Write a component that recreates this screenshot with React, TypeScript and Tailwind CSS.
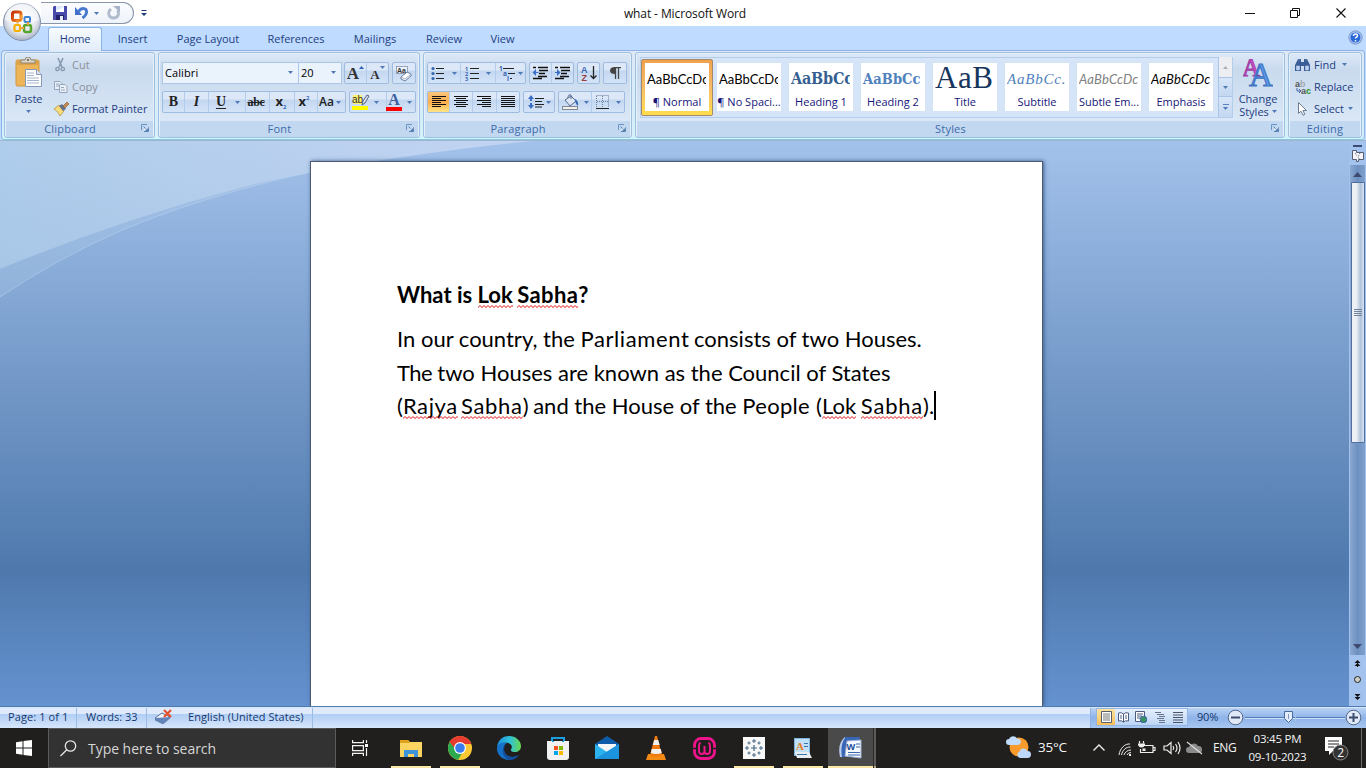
import React from "react";

type Kids = { children?: React.ReactNode };

const Caret = ({ className = "" }: { className?: string }) => (
  <svg width="5" height="3" viewBox="0 0 5 3" className={`shrink-0 ${className}`}>
    <path d="M0 0h5L2.500 3z" fill="#4f79b8" />
  </svg>
);

const Launcher = () => (
  <svg width="8" height="8" viewBox="0 0 8 8" fill="none">
    <path d="M.5 6V.5H6" stroke="#6a94c4" />
    <path d="M2.500 2.500l3 3M7.500 3v4.500H3" stroke="#5682b4" />
    <path d="M4 7V5h3V3" stroke="#fff" strokeWidth=".6" />
    <path d="M4 7h3.500V3.500z" fill="#5682b4" />
  </svg>
);

function Group({ label, width, launcher = true, children }: Kids & { label: string; width: string; launcher?: boolean }) {
  return (
    <section className={`flex h-[86px] shrink-0 flex-col overflow-hidden rounded-[3px] border border-[#9dbfe0] bg-linear-to-b from-[#dce8f6] from-0% via-[#c9daee] via-20% to-[#d9e7f6] to-80% shadow-[inset_0_0_0_1px_#e6f0fa] ${width}`}>
      <div className="flex h-[68px] shrink-0">{children}</div>
      <div className="mx-px flex h-[16px] items-center bg-[#c1d8f0] text-[#3e6aaa]">
        <span className={`flex-1 pb-px text-center tracking-[0.2px] ${launcher ? "pr-[7px]" : ""}`}>{label}</span>
        {launcher && <span className="mr-[4px] mb-[2px]"><Launcher /></span>}
      </div>
    </section>
  );
}

const Box = ({ children, w }: Kids & { w: string }) => (
  <div className={`flex h-[22px] shrink-0 items-stretch overflow-hidden rounded-[2px] border border-[#9ebbe0] bg-linear-to-b from-[#dce8f8] from-35% via-[#c3d7f0] via-40% to-[#d4e4f8] ${w}`}>{children}</div>
);
const Cell = ({ children, w, on = false, line = true }: Kids & { w: string; on?: boolean; line?: boolean }) => (
  <div className={`flex shrink-0 items-center justify-center ${line ? "border-r border-[#b4cceb]" : ""} ${on ? "bg-linear-to-b from-[#f9c57d] via-[#fbad4b] to-[#ffe486]" : ""} ${w}`}>{children}</div>
);

const Lines = ({ rows }: { rows: number[][] }) => (
  <svg width="15" height="14" viewBox="0 0 15 14" shapeRendering="crispEdges">
    {rows.map(([x, w], i) => (
      <rect key={i} x={x} y={1 + i * 2} width={w} height="1" fill="#111" />
    ))}
  </svg>
);

const OfficeOrb = () => (
  <svg width="40" height="40" viewBox="0 0 40 40">
    <defs>
      <radialGradient id="orb" cx=".5" cy=".4" r=".6">
        <stop offset="0" stopColor="#fff" />
        <stop offset=".65" stopColor="#e4e7ee" />
        <stop offset="1" stopColor="#a7b1c4" />
      </radialGradient>
      <linearGradient id="red" x2="1" y2="1"><stop stopColor="#c73008" /><stop offset="1" stopColor="#f58b1f" /></linearGradient>
    </defs>
    <circle cx="20" cy="20" r="18.500" fill="url(#orb)" stroke="#8293ad" />
    <path d="M3 18a17 17 0 0 1 34 0q-17 8-34 0" fill="#fff" opacity=".5" />
    <g fill="none" strokeWidth="2.500">
      <rect x="10.500" y="10" width="8.500" height="8.500" rx="2" stroke="url(#red)" strokeWidth="3" />
      <rect x="22.500" y="15" width="5.500" height="5" rx="1" stroke="#3e83d2" strokeWidth="2" />
      <rect x="12.500" y="23" width="5.500" height="6" rx="1" stroke="#f5b000" strokeWidth="2.200" />
      <rect x="22" y="23" width="7" height="7" rx="2" stroke="#57a52d" />
    </g>
    <path d="M18.500 13h2v4h-2zM25 20h2v3h-2zM14.500 18.500h2v3h-2zM18 25h4v2h-4z" fill="#f0a13b" />
  </svg>
);

const QuickAccess = () => (
  <div className="flex h-[22px] w-[93px] items-center rounded-r-full border border-l-0 border-[#8995a8] bg-linear-to-b from-[#fbfcfe] to-[#eef3fa] pl-[12px]">
    <svg width="14" height="14" viewBox="0 0 14 14">
      <path d="M0 1l1-1h13v14H0z" fill="#4a4aad" />
      <path d="M3 0h8v6H3z" fill="#dfe9fa" /><path d="M3 5l8-4v5H3z" fill="#fff" />
      <path d="M3 9h8v5H3z" fill="#23236b" /><path d="M7 10h3v4H7z" fill="#e8ecf8" />
    </svg>
    <svg className="ml-[8px]" width="13" height="14" viewBox="0 0 13 14" fill="none">
      <path d="M3.500 5.500C7 1 12 2 11.500 6.500C11.300 9 9.500 10.500 7.500 12" stroke="#4779cf" strokeWidth="2.900" />
      <path d="M0 1v8h7z" fill="#3f6fc8" />
    </svg>
    <Caret className="ml-[6px]" />
    <svg className="ml-[8px]" width="14" height="14" viewBox="0 0 14 14" fill="none">
      <path d="M4 3C0 6 1.500 12 6.500 12S12.500 7 10.500 4" stroke="#b1bccd" strokeWidth="2.900" />
      <path d="M6 0h7v6z" fill="#a7b4c8" />
    </svg>
  </div>
);

const TitleBar = () => (
  <header className="flex h-[26px] shrink-0 items-center bg-white text-[12px] text-[#111]">
    <div className="flex w-[150px] items-center pl-[41px]">
      <QuickAccess />
      <svg className="ml-[7px] shrink-0" width="6" height="7" viewBox="0 0 6 7"><path d="M.5 0h5v1h-5zM0 3h6L3 6z" fill="#213f78" /></svg>
    </div>
    <h1 className="flex-1 pt-px pr-[7px] text-center tracking-[-0.1px]">what - Microsoft Word</h1>
    <div className="flex w-[139px] pr-[2px] pb-px">
      <svg width="137" height="24" viewBox="0 0 137 24" fill="none" stroke="#111">
        <path d="M18 12.500h10" />
        <path d="M63.500 9.500h7v7h-7zM65.500 9v-1.500h7v7H71" />
        <path d="M109.500 7.500l9 9m0-9l-9 9" strokeWidth="1.100" />
      </svg>
    </div>
  </header>
);

const tabs: [string, string][] = [
  ["Insert", "w-[59px]"], ["Page Layout", "w-[92px]"], ["References", "w-[84px]"],
  ["Mailings", "w-[74px]"], ["Review", "w-[64px]"], ["View", "w-[53px]"],
];

const Tabs = () => (
  <nav className="flex h-[24px] shrink-0 bg-[#bfdbff] pl-[48px] text-[#1e4082]">
    <div className="z-10 mt-px flex h-[24px] w-[54px] items-center justify-center rounded-t-[3px] border border-b-0 border-[#8bb3e3] bg-linear-to-b from-[#f7fbff] to-[#e1ecf9] pb-[2px] tracking-[-0.1px]">Home</div>
    <div className="ml-px flex">
      {tabs.map(([t, w]) => <div key={t} className={`flex items-center justify-center ${w}`}>{t}</div>)}
    </div>
    <svg className="mt-[4px] mr-[3px] ml-auto" width="15" height="15" viewBox="0 0 15 15">
      <circle cx="7.500" cy="7.500" r="6.700" fill="#2a68d8" stroke="#8fa3c9" />
      <circle cx="7.500" cy="7.500" r="5.600" fill="none" stroke="#e8f1ff" strokeWidth=".9" />
      <path d="M5.500 6q0-2 2-2t2 1.700q0 1-1.200 1.500-.8.300-.8 1.300M7.500 10v1.500" fill="none" stroke="#fff" strokeWidth="1.500" />
    </svg>
  </nav>
);

const ClipboardGroup = () => (
  <Group label="Clipboard" width="w-[151px]">
    <div className="flex w-[47px] flex-col items-center pt-[4px] text-[#1e4082]">
      <svg width="28" height="31" viewBox="0 0 28 31">
        <rect x="1" y="3" width="23" height="26" rx="1.500" fill="#eeb458" stroke="#cf953f" />
        <path d="M2 4h21v4H2z" fill="#dba24a" />
        <path d="M6 6V3h4q0-3 3-3t3 3h4v3z" fill="#ddd5c6" stroke="#817b72" strokeWidth=".8" />
        <circle cx="13" cy="3" r="1" fill="#555" />
        <path d="M10.500 12.500h11l5 5v12h-16z" fill="#fff" stroke="#8598b8" />
        <path d="M21.500 12.500v5h5" fill="#dce5f3" stroke="#8598b8" />
        <path d="M12 16h7M12 18.500h7M12 21h12M12 23.500h12M12 26h12" stroke="#a5b5d0" />
      </svg>
      <span className="mt-[4px] leading-[14px]">Paste</span>
      <Caret className="mt-[4px]" />
    </div>
    <div className="flex flex-col text-[#8b909a]">
      <div className="flex h-[22px] items-center gap-[6px] pt-px pl-[3px]">
        <svg width="11" height="14" viewBox="0 0 11 14" fill="none" stroke="#8497ad"><path d="M3 0l4 9M8 0L4 9" strokeWidth="1.500" /><circle cx="2.500" cy="11" r="1.700" strokeWidth="1.300" /><circle cx="7.800" cy="11" r="1.700" strokeWidth="1.300" /></svg>Cut
      </div>
      <div className="flex h-[22px] items-center gap-[4px] pt-px pl-[2px]">
        <svg width="14" height="12" viewBox="0 0 14 12" fill="#eaf0f8" stroke="#94a5bd"><path d="M.5.500H6l2 2v6H.500z" /><path d="M5.500 3.500H11l2 2v6H5.500zM2 3h3M2 5h3M7 6.500h3M7 9h4" /></svg>Copy
      </div>
      <div className="flex h-[22px] items-center gap-[3px] pt-px pl-[2px] tracking-[-0.1px] text-[#1e4082]">
        <svg width="15" height="14" viewBox="0 0 15 14"><path d="M0 7l5-4 5 6-4 5q-1-4-6-7z" fill="#f7dc79" stroke="#ab8a3a" strokeWidth=".7" /><path d="M5 4l3-2 4 5-3 2z" fill="#63718b" /><path d="M9 4l4-4 2 2-4 4z" fill="#c98b50" stroke="#725238" strokeWidth=".6" /></svg>Format Painter
      </div>
    </div>
  </Group>
);

const FontGroup = () => (
  <Group label="Font" width="w-[262px]">
    <div className="flex flex-col gap-[7px] pt-[9px] pl-[3px]">
      <div className="flex h-[22px] text-black">
        <div className="flex w-[137px] items-center justify-between border border-[#abc6e8] bg-[#eaf2fb] pr-[5px] pb-px pl-[2px] tracking-[0.1px]">Calibri<Caret /></div>
        <div className="-ml-px flex w-[44px] items-center justify-between border border-[#abc6e8] bg-[#eaf2fb] pr-[5px] pb-px pl-[2px]">20<Caret /></div>
        <div className="ml-[2px] flex gap-[3px] font-['Liberation_Serif',serif] font-bold text-[#333]">
          <Box w="w-[45px]">
            <Cell w="w-[22px]"><span className="text-[17px] leading-none">A</span><svg className="mb-[11px]" width="5" height="3"><path d="M0 3h5L2.500 0z" fill="#2e5fb5" /></svg></Cell>
            <Cell w="w-[21px]" line={false}><span className="mt-[3px] text-[13px] leading-none">A</span><Caret className="mb-[11px]" /></Cell>
          </Box>
          <Box w="w-[24px]">
            <Cell w="w-[22px]" line={false}>
              <svg width="17" height="17" viewBox="0 0 17 17"><rect x=".5" y="1.500" width="11" height="7" fill="#eef3fb" stroke="#7485a5" strokeWidth=".7" /><text x="1" y="8" fontSize="7" fill="#333" className="font-['Liberation_Sans',sans-serif] font-bold">Aa</text><path d="M5 12l6-5 4 2v2l-6 5-4-2z" fill="#fff" stroke="#657ba0" /><path d="M5 12l4 2 6-5" fill="none" stroke="#a2b1cc" /></svg>
            </Cell>
          </Box>
        </div>
      </div>
      <div className="flex gap-[3px] text-[#222]">
        <Box w="w-[184px]">
          <Cell w="w-[22px]"><b className="font-['Liberation_Serif',serif] text-[14px]">B</b></Cell>
          <Cell w="w-[24px]"><i className="font-['Liberation_Serif',serif] text-[14px] font-bold">I</i></Cell>
          <Cell w="w-[24px]" line={false}><b className="font-['Liberation_Serif',serif] text-[14px] leading-[12px] underline underline-offset-2">U</b></Cell>
          <Cell w="w-[13px]"><Caret className="-ml-[3px]" /></Cell>
          <Cell w="w-[24px]"><span className="-ml-[3px] font-['Liberation_Serif',serif] text-[12px] font-bold tracking-[-0.3px] line-through">abc</span></Cell>
          <Cell w="w-[25px]"><b className="-mt-px -ml-[2px] text-[13px]">x</b><b className="mt-[9px] text-[6px] text-[#3768b8]">2</b></Cell>
          <Cell w="w-[23px]"><b className="-mt-px -ml-[4px] text-[13px]">x</b><b className="mb-[8px] text-[6px] text-[#3768b8]">2</b></Cell>
          <Cell w="w-[27px]" line={false}><span className="-ml-[3px] text-[12px] font-semibold">Aa</span><Caret className="ml-[2px]" /></Cell>
        </Box>
        <Box w="w-[67px]">
          <Cell w="w-[37px]">
            <svg className="-ml-[5px]" width="18" height="17" viewBox="0 0 18 17"><rect x="1" y="1" width="9" height="9" fill="#fff26b" /><text x="0" y="9" fontSize="10" className="font-['Liberation_Sans',sans-serif]" fill="#333">ab</text><path d="M10 11l1-4 4-6 2 1-4 7z" fill="#dfe6f1" stroke="#4f6180" /><rect y="12" width="16" height="4" fill="#fffb00" /></svg>
            <Caret className="ml-[4px]" />
          </Cell>
          <Cell w="w-[28px]" line={false}>
            <span className="-ml-[4px] flex flex-col items-center"><b className="font-['Liberation_Serif',serif] text-[16px] leading-[12px] text-[#3b5f9f]">A</b><span className="mt-px h-[4px] w-[16px] bg-[#fb0100]" /></span>
            <Caret className="ml-[5px]" />
          </Cell>
        </Box>
      </div>
    </div>
  </Group>
);

const ListIcon = ({ kind }: { kind: "dots" | "nums" | "multi" }) => (
  <svg width="17" height="15" viewBox="0 0 17 15">
    {kind === "dots" && [2, 7, 12].map((y) => <g key={y}><circle cx="2" cy={y + 0.5} r="1.600" fill="#3764b0" /><path d={`M5 ${y + 0.5}h8`} stroke="#222" /></g>)}
    {kind === "nums" && [2, 7, 12].map((y, i) => <g key={y}><text x="0" y={y + 2.5} fontSize="5.500" fill="#3764b0" className="font-bold">{i + 1}</text><path d={`M5 ${y + 0.5}h9`} stroke="#222" /></g>)}
    {kind === "multi" && <g fontSize="6.500" fill="#3764b0" className="font-bold"><text x="0" y="5">1</text><text x="4" y="10">a</text><text x="8" y="15">i</text><path d="M4 2.500h11M9 7.500h7M11 12.500h2" stroke="#222" /></g>}
  </svg>
);

const IndentIcon = ({ right = false }: { right?: boolean }) => (
  <svg width="17" height="14" viewBox="0 0 17 14" fill="none" stroke="#111">
    <path d="M1 1.500h3M6 1.500h10M7 4.500h9M7 7.500h6M6 10.500h9M1 12.500h9" strokeWidth="1.300" />
    <path d={right ? "M1 6h2V3l3.500 3.500L3 10V7H1z" : "M6.500 6H4V3L.5 6.500 4 10V7h2.500z"} fill="#3b6ec5" stroke="none" />
  </svg>
);

const ParagraphGroup = () => (
  <Group label="Paragraph" width="w-[209px]">
    <div className="flex flex-col gap-[7px] pt-[9px] pl-[3px]">
      <div className="flex gap-[3px]">
        <Box w="w-[99px]">
          <Cell w="w-[33px]"><ListIcon kind="dots" /><Caret className="ml-[4px]" /></Cell>
          <Cell w="w-[35px]"><ListIcon kind="nums" /><Caret className="ml-[4px]" /></Cell>
          <Cell w="w-[29px]" line={false}><ListIcon kind="multi" /><Caret className="ml-[2px]" /></Cell>
        </Box>
        <Box w="w-[45px]"><Cell w="w-[22px]"><IndentIcon /></Cell><Cell w="w-[21px]" line={false}><IndentIcon right /></Cell></Box>
        <Box w="w-[23px]">
          <Cell w="w-[21px]" line={false}>
            <svg width="16" height="16" viewBox="0 0 16 16" className="font-['Liberation_Sans',sans-serif] font-bold"><text x="0" y="7.500" fontSize="9" fill="#3c68b5">A</text><text x="0.500" y="15.500" fontSize="9" fill="#9b3c3c">Z</text><path d="M12.500 1v12M9.500 10.500l3 3 3-3" fill="none" stroke="#222" strokeWidth="1.300" /></svg>
          </Cell>
        </Box>
        <Box w="w-[24px]"><Cell w="w-[22px]" line={false}><svg width="11" height="13" viewBox="0 0 11 13"><path d="M5 0q-5 0-5 3.500T5 7z" fill="#444" /><path d="M4 .6h7M5.500 0v12M8.500 0v12" stroke="#444" strokeWidth="1.300" /></svg></Cell></Box>
      </div>
      <div className="flex gap-[3px]">
        <Box w="w-[93px]">
          <Cell w="w-[22px]" on><Lines rows={[[1, 14], [1, 9], [1, 14], [1, 9], [1, 14], [1, 9]]} /></Cell>
          <Cell w="w-[23px]"><Lines rows={[[0, 14], [2, 10], [0, 14], [2, 10], [0, 14], [2, 10]]} /></Cell>
          <Cell w="w-[24px]"><Lines rows={[[0, 14], [5, 9], [0, 14], [5, 9], [0, 14], [5, 9]]} /></Cell>
          <Cell w="w-[22px]" line={false}><Lines rows={[[0, 14], [0, 14], [0, 14], [0, 14], [0, 14], [0, 14]]} /></Cell>
        </Box>
        <Box w="w-[32px]">
          <Cell w="w-[30px]" line={false}>
            <svg width="16" height="16" viewBox="0 0 16 16"><path d="M3 1L0 5h2v2h2V5h2zM3 15l3-4H4V9H2v2H0z" fill="#3b6ec5" /><path d="M7 4.500h9M7 7.500h7M7 10.500h9M7 13h7" stroke="#222" /></svg><Caret className="ml-[2px]" />
          </Cell>
        </Box>
        <Box w="w-[67px]">
          <Cell w="w-[33px]">
            <svg width="18" height="16" viewBox="0 0 18 16"><path d="M3 6l6-4 5 5-6 5z" fill="#dce6f4" stroke="#53688d" /><path d="M6 4q0-4 3-3v4" fill="none" stroke="#53688d" /><path d="M13 5q4 2 3 7-2-1-3-5z" fill="#3769b5" /><rect x=".5" y="12.500" width="15" height="3" fill="#f4efe8" stroke="#7c8798" /></svg><Caret className="ml-[4px]" />
          </Cell>
          <Cell w="w-[32px]" line={false}>
            <svg width="13" height="14" viewBox="0 0 13 14" fill="none"><path d="M.5.500h12v12M.5 1v12M6.500 1v12M1 6.500h12" stroke="#6c7f9f" strokeDasharray="1 1" /><path d="M0 13.500h13" stroke="#222" /></svg><Caret className="ml-[7px]" />
          </Cell>
        </Box>
      </div>
    </div>
  </Group>
);

const styles = [
  { name: "¶ Normal", sample: "AaBbCcDc", cls: "text-[13px] text-black font-['Lato',sans-serif]", on: true },
  { name: "¶ No Spaci...", sample: "AaBbCcDc", cls: "text-[13px] text-black font-['Lato',sans-serif]" },
  { name: "Heading 1", sample: "AaBbCc", cls: "text-[16px] font-bold text-[#365f91] tracking-[-0.2px] font-['DejaVu_Serif_Condensed','DejaVu_Serif',serif]" },
  { name: "Heading 2", sample: "AaBbCc", cls: "text-[14.500px] font-bold text-[#4f81bd] tracking-[0.1px] font-['DejaVu_Serif_Condensed','DejaVu_Serif',serif]" },
  { name: "Title", sample: "AaB", cls: "text-[31px] pb-[4px] text-[#17365d] tracking-[0.5px] font-['Liberation_Serif',serif]" },
  { name: "Subtitle", sample: "AaBbCc.", cls: "text-[15px] italic text-[#4f81bd] tracking-[0.800px] font-['Liberation_Serif',serif]" },
  { name: "Subtle Em...", sample: "AaBbCcDc", cls: "text-[13px] italic text-[#808080] tracking-[0.2px] font-['Lato',sans-serif]" },
  { name: "Emphasis", sample: "AaBbCcDc", cls: "text-[13px] italic text-black tracking-[0.2px] font-['Lato',sans-serif]" },
];

const StylesGroup = () => (
  <Group label="Styles" width="w-[650px]">
    <div className="mt-[4px] ml-[4px] flex h-[61px] w-[593px] border border-[#b3cdec] bg-[#d5e5f7]">
      {styles.map((s) => (
        <div key={s.name} className={`mt-px flex h-[57px] w-[72px] shrink-0 justify-center rounded-[2px] ${s.on ? "border border-[#a5896d] bg-linear-to-b from-[#f0a14c] via-[#f8bd63] to-[#ffdd4d] pt-[3px]" : "pt-[4px]"}`}>
          <div className="flex h-[48px] w-[64px] flex-col items-center overflow-hidden bg-white">
            <div className={`mr-px flex h-[32px] w-[59px] shrink-0 items-center overflow-hidden whitespace-nowrap ${s.cls}`}>{s.sample}</div>
            <div className="w-[64px] text-center leading-[14px] whitespace-nowrap text-[#15157a]">{s.name}</div>
          </div>
        </div>
      ))}
      <div className="-my-px ml-auto flex w-[14px] flex-col border-l border-[#a9c4e6]">
        <div className="flex h-[20px] items-center justify-center bg-[#eceef1]"><svg width="5" height="3"><path d="M0 3h5L2.500 0z" fill="#a9adb5" /></svg></div>
        <div className="flex h-[20px] items-center justify-center border-y border-[#a9c4e6] bg-linear-to-b from-[#d8e6f8] to-[#c3d7f1]"><Caret /></div>
        <div className="flex h-[20px] flex-col items-center justify-center gap-[2px] bg-linear-to-b from-[#d8e6f8] to-[#c3d7f1]"><span className="h-px w-[6px] bg-[#5b83bd]" /><Caret /></div>
      </div>
    </div>
    <div className="flex w-[50px] flex-col items-center pt-[6px] text-[#1e4082]">
      <svg width="30" height="31" viewBox="0 0 30 31" className="font-['Liberation_Serif',serif]">
        <text x="-1" y="17" fontSize="25" fill="#d34fc9" stroke="#a03fa6" strokeWidth="1">A</text>
        <text x="6" y="27" fontSize="33" fill="#5c97e6" stroke="#3a72c2" strokeWidth="1">A</text>
      </svg>
      <span className="mt-[2px] leading-[13px]">Change</span>
      <span className="flex items-center gap-[3px] leading-[13px]">Styles <Caret /></span>
    </div>
  </Group>
);

const EditingGroup = () => (
  <Group label="Editing" width="w-[74px]" launcher={false}>
    <div className="flex flex-col pl-[6px] text-[#1e4082]">
      <div className="flex h-[22px] items-center gap-[4px] pt-px">
        <svg width="15" height="13" viewBox="0 0 15 13"><path d="M3 1h3v3h3V1h3l3 6v6H9V8H6v5H0V7z" fill="#3a5d98" /><path d="M1.500 8h3v4h-3zM10.500 8h3v4h-3zM3.500 2h1M10.500 2h1" fill="#bdd0ee" stroke="#bdd0ee" strokeWidth=".6" /></svg>Find<Caret className="ml-[2px]" />
      </div>
      <div className="flex h-[22px] items-center gap-[3px] pt-px tracking-[-0.1px]">
        <svg width="16" height="14" viewBox="0 0 16 14" fontSize="9" className="font-['Liberation_Sans',sans-serif] font-bold"><text x="0" y="7" fill="#555">a</text><text x="5" y="7" fill="#a4a9b2">b</text><text x="6" y="14" fill="#555">a</text><text x="11" y="14" fill="#2a9125">c</text><path d="M2 8v3h3M4 9l2 2-2 2" fill="none" stroke="#4266a5" /></svg>Replace
      </div>
      <div className="flex h-[22px] items-center gap-[7px] pt-px pl-[3px] tracking-[-0.1px]">
        <svg width="9" height="14" viewBox="0 0 9 14"><path d="M.5.500v11l2.500-2.300 2 4 1.800-.8L5 8.500h3.500z" fill="#fff" stroke="#6e7b95" /></svg>Select<Caret className="-ml-[3px]" />
      </div>
    </div>
  </Group>
);

const Ribbon = () => (
  <div className="flex h-[90px] shrink-0 bg-[#bfdbff] px-px">
    <div className="flex flex-1 gap-[3px] rounded-[4px] border border-[#8db2e3] border-b-[#8fc3dc] bg-linear-to-b from-[#dde9f7] to-[#d4f0fb] pt-px pl-[2px] shadow-[inset_0_-1px_0_#c9fbff]">
      <ClipboardGroup /><FontGroup /><ParagraphGroup /><StylesGroup /><EditingGroup />
    </div>
  </div>
);

const Misspelt = ({ children, cls = "" }: Kids & { cls?: string }) => (
  <span className={`relative ${cls}`}>
    {children}
    <svg className="absolute bottom-[0px] left-0 h-[3px] w-full" aria-hidden="true">
      <defs><pattern id="squiggle" width="4" height="3" patternUnits="userSpaceOnUse"><path d="M-1 3.500L2 .5l3 3" fill="none" stroke="#e01010" strokeWidth="1" /></pattern></defs>
      <rect width="100%" height="3" fill="url(#squiggle)" />
    </svg>
  </span>
);

const Page = () => (
  <article className="z-10 mt-[21px] ml-[310px] h-[545px] w-[733px] border border-b-0 border-[#4d5a6d] bg-white pt-[116px] pl-[86px] font-['Lato',sans-serif] text-[22px] whitespace-pre text-black shadow-[1px_0_4px_#3d5f90]">
    <h2 className="h-[44px] leading-[33px] font-bold">What is <Misspelt>Lok</Misspelt><span className="tracking-[-1px]"> </span><Misspelt cls="tracking-[0.400px]">Sabha</Misspelt>?</h2>
    <p className="leading-[33.500px]">
      <span className="block">In our country, the <span className="tracking-[0.600px]">Parliament</span><span className="tracking-[-1px]"> </span>consists of two Houses.</span>
      <span className="block"><span className="tracking-[-0.500px]">The </span>two Houses are known as the Council of States</span>
      <span className="flex items-center">
        <span>
          (<Misspelt cls="tracking-[0.600px]">Rajya</Misspelt><span className="tracking-[-2.500px]"> </span><Misspelt cls="tracking-[0.700px]">Sabha</Misspelt>)<span className="tracking-[-1px]"> </span>and the House of the <span className="tracking-[0.300px]">People (</span>
          <Misspelt>Lok</Misspelt><span className="tracking-[-1px]"> </span><Misspelt cls="tracking-[0.800px]">Sabha</Misspelt>).
        </span>
        <span className="h-[29px] w-[2px] bg-black" />
      </span>
    </p>
  </article>
);

const ScrollBar = () => (
  <aside className="ml-auto flex w-[17px] flex-col items-center bg-[#a3c3ee]">
    <span className="mt-[5px] h-[2px] w-[9px] shrink-0 bg-[#3a4c74]" />
    <svg className="mt-[3px] shrink-0" width="12" height="12" viewBox="0 0 12 12"><path d="M.5.500h4v2h7v7h-5v2h-2v-2h-4z" fill="#f5f5fa" stroke="#545c76" /><path d="M3 3l2 3M8 3L6 7l2 3" stroke="#545c76" strokeDasharray="1 1" fill="none" /></svg>
    <div className="mt-[3px] flex h-[490px] w-[15px] shrink-0 flex-col items-center bg-linear-to-r from-[#8ba8d1] via-[#6d91c1] to-[#7ea0cd]">
      <svg className="mt-[7px]" width="9" height="5"><path d="M0 5h9L4.500 0z" fill="#3e4a70" /></svg>
      <div className="mt-[5px] flex h-[261px] w-[14px] shrink-0 flex-col items-center justify-center gap-px rounded-[1px] border border-[#536fa0] bg-linear-to-r from-[#edf0f5] from-35% via-[#b3c4da] via-70% to-[#d7e4f4]">
        {[0, 1, 2, 3].map((k) => <span key={k} className="h-px w-[8px] bg-[#73839c]" />)}
      </div>
      <svg className="mt-auto mb-[6px]" width="9" height="5"><path d="M0 0h9L4.500 5z" fill="#3e4a70" /></svg>
    </div>
    <svg className="-ml-px mt-[5px] shrink-0" width="9" height="42" viewBox="0 0 9 42" fill="#111">
      <path d="M4.500 0l3 3h-6zM4.500 3l3 3h-6zM4 2h1v5H4z" />
      <circle cx="4.500" cy="19.500" r="3" fill="#cfcfc8" stroke="#222" />
      <path d="M1.500 34h6l-3 3zM1.500 37h6l-3 3z" />
    </svg>
  </aside>
);

const Workspace = () => (
  <main className="relative flex h-[567px] shrink-0 overflow-hidden border-b border-[#4f7caf] bg-linear-to-b from-[#a3c2eb] from-0% via-[#4f79ad] via-76% to-[#6592d0] to-100%">
    <svg className="absolute top-0 left-0" width="640" height="170" viewBox="0 0 640 170" fill="none">
      <defs><linearGradient id="sky" x2="1"><stop stopColor="#b4d1ec" stopOpacity=".7" /><stop offset="1" stopColor="#d0dcf5" stopOpacity=".7" /></linearGradient></defs>
      <path d="M0 0H540Q350 20 240 48Q120 80 0 129z" fill="url(#sky)" />
      <path d="M0 129Q120 80 240 48L310 32Q200 57 120 91Q60 117 0 157z" fill="#b7d4ed" opacity=".25" />
      <path d="M0 157Q60 117 120 91Q200 57 310 32Q420 8 540 0" stroke="#c0d8f3" opacity=".5" />
    </svg>
    <div className="absolute top-0 left-0 h-px w-full bg-[#9fb4d3]" />
    <Page />
    <ScrollBar />
  </main>
);

const ViewIcons = () => (
  <div className="flex h-[18px] w-[92px] items-center border border-[#94b5e2] bg-linear-to-b from-[#e5f0fd] to-[#bcd5f5]">
    <span className="flex h-full w-[18px] items-center justify-center bg-linear-to-b from-[#fde4a0] to-[#f9bf58]"><svg width="11" height="12" viewBox="0 0 11 12"><path d="M.5.500h10v11H.500z" fill="#fff" stroke="#575d6b" /><path d="M2 3h7M2 5h7M2 7h7M2 9h7" stroke="#777" /></svg></span>
    <svg className="ml-[3px]" width="11" height="11" viewBox="0 0 11 11"><path d="M.5 1q3-1 5 1 2-2 5-1v8q-3-1-5 1-2-2-5-1zM5.500 2v8" fill="#fff" stroke="#4b5c7e" /><path d="M2 4h2M2 6h2M7 4h2M7 6h2" stroke="#4b5c7e" /></svg>
    <svg className="ml-[6px]" width="12" height="12" viewBox="0 0 12 12"><path d="M.5.500h9v10H.500z" fill="#fff" stroke="#4b5c7e" /><path d="M2 3h6M2 5h5M2 7h3" stroke="#4b5c7e" /><circle cx="8.500" cy="8.500" r="3.300" fill="#3a9160" stroke="#3765b0" /></svg>
    <svg className="ml-[8px]" width="10" height="11" viewBox="0 0 10 11" stroke="#67748c"><path d="M0 .5h6M2 2.500h7M4 4.500h6M2 6.500h7M4 8.500h6M4 10.500h6" /></svg>
    <svg className="ml-[8px]" width="11" height="11" viewBox="0 0 11 11" stroke="#4b5569"><path d="M0 .5h10M0 3h10M0 5.500h10M0 8h10M0 10.500h10" /></svg>
  </div>
);

const Round = ({ plus = false }: { plus?: boolean }) => (
  <svg width="17" height="17" viewBox="0 0 17 17" className="shrink-0"><circle cx="8.500" cy="8.500" r="7.300" fill="#dfe9f8" stroke="#526685" /><path d={plus ? "M4 8.500h9M8.500 4v9" : "M4 8.500h9"} stroke="#3c4d6c" strokeWidth="2" /></svg>
);

const StatusBar = () => (
  <footer className="flex h-[21px] shrink-0 items-stretch border-t border-[#d8e7fb] bg-linear-to-b from-[#dfebfc] from-28% via-[#b1cef5] via-32% to-[#d6e6fb] text-[#15386f]">
    <div className="flex w-[77px] items-center border-r border-[#9dbce4] pb-[3px] pl-[8px] tracking-[0.1px] whitespace-nowrap">Page: 1 of 1</div>
    <div className="flex w-[70px] items-center border-r border-[#9dbce4] pb-[3px] pl-[9px] whitespace-nowrap">Words: 33</div>
    <div className="flex w-[166px] items-center border-r border-[#9dbce4] pb-[3px] pl-[8px] whitespace-nowrap">
      <svg width="17" height="15" viewBox="0 0 17 15"><path d="M0 9l7-5 8 4-7 6z" fill="#f7fafc" stroke="#566c91" /><path d="M0 9v2l8 4 7-6V8" fill="#6385bc" stroke="#566c91" strokeWidth=".6" /><path d="M9 1l7 7M16 1L9 8" stroke="#e5512f" strokeWidth="2.200" /></svg>
      <span className="ml-[16px] tracking-[0.05px]">English (United States)</span>
    </div>
    <div className="ml-auto flex w-[276px] items-center border-l border-[#8db1e2] bg-linear-to-b from-[#b9d2f5] via-[#8eb3e8] to-[#a8c7f0] pb-[2px] pl-[5px]">
      <ViewIcons />
      <span className="w-[39px] pb-px pl-[9px] tracking-[-0.2px]">90%</span>
      <Round />
      <svg className="ml-px" width="100" height="16" viewBox="0 0 100 16"><path d="M0 8.500h100" stroke="#537bb5" /><path d="M0 9.500h100" stroke="#d0e2fa" /><path d="M50.500 5v7" stroke="#a6c4ec" /><path d="M39.500 2.500h8v7l-4 4-4-4z" fill="#e3edfa" stroke="#476a9f" /><path d="M43.500 5v5" stroke="#7c97c0" /></svg>
      <Round plus />
    </div>
  </footer>
);

const Pin = ({ children, open = false }: Kids & { open?: boolean }) => (
  <div className="flex h-[40px] w-[49px] flex-col items-center">
    <div className="flex h-[38px] items-center pt-[2px]">{children}</div>
    <div className={`h-[2px] w-[40px] ${open ? "bg-[#fbe8a6]" : ""}`} />
  </div>
);

const TaskIcons = () => (
  <div className="ml-[17px] flex">
    <Pin open><svg width="22" height="19" viewBox="0 0 22 19"><path d="M0 1h8l2 2h12v15H0z" fill="#fcd462" /><path d="M0 1h8l2 3H0z" fill="#e0a11b" /><path d="M4 18v-7h14v7h-4v-3H8v3z" fill="#3d94da" /></svg></Pin>
    <Pin open>
      <svg width="24" height="24" viewBox="0 0 24 24"><circle cx="12" cy="12" r="12" fill="#fcc934" /><path d="M12 12L1.600 6A12 12 0 0 0 10 23.800L15.500 15z" fill="#2da94f" /><path d="M1.600 6A12 12 0 0 1 22.400 6L23.300 8H12L8 14z" fill="#e63b2e" /><circle cx="12" cy="12" r="6" fill="#fff" /><circle cx="12" cy="12" r="4.800" fill="#3b7dee" /></svg>
    </Pin>
    <Pin>
      <svg width="24" height="24" viewBox="0 0 24 24"><defs><linearGradient id="edge" x2="1"><stop stopColor="#1c8fdb" /><stop offset=".55" stopColor="#2fc1d8" /><stop offset="1" stopColor="#6ad84b" /></linearGradient></defs><path d="M0 11C1 3 7 0 12 0c7 0 12 5 12 10 0 4-3 6-6 6-4 0-5-2-3.500-3.500C16 10 13 6 8 7 4 7.500 1 9 0 11z" fill="url(#edge)" /><path d="M0 11C1.500 7 6 5.500 10 7 6 9 5.500 14 8 18c2 3 5 4.500 8 5C8 26-1 20 0 11z" fill="#1672c8" /><path d="M10 8C5 12 7 18 12 20c4 1.500 7 0 10-1-3 4-6 5-9 5C5 22 3 12 10 8z" fill="#134f9c" /></svg>
    </Pin>
    <Pin><svg width="24" height="24" viewBox="0 0 24 24"><path d="M6 8V2h12v6" fill="none" stroke="#1b9de2" strokeWidth="2" /><path d="M1 5h22v16q0 3-3 3H4q-3 0-3-3z" fill="#f1f1f1" /><path d="M6 5.500h2M16 5.500h2" stroke="#1b9de2" /><path d="M8 10h4v4H8z" fill="#f25022" /><path d="M13 10h4v4h-4z" fill="#7fba00" /><path d="M8 15h4v4H8z" fill="#00a4ef" /><path d="M13 15h4v4h-4z" fill="#ffb900" /></svg></Pin>
    <Pin><svg width="24" height="24" viewBox="0 0 24 24"><path d="M0 8l12-8 12 8v4H0z" fill="#0d5ba9" /><path d="M3 8h18v8H3z" fill="#f4f6f8" /><path d="M0 8l12 8L24 8v15H0z" fill="#2cb3ef" /><path d="M0 23L24 8v15z" fill="#1b93dd" /></svg></Pin>
    <Pin><svg width="20" height="24" viewBox="0 0 20 24"><path d="M2 18h16l2 6H0z" fill="#f28a15" /><path d="M10 0h1l5 19q-6 3-12 0L9 0z" fill="#f07a12" /><path d="M8.200 4h4l1.500 5H6.800zM5.800 13h9l1 4q-5.500 2-11 0z" fill="#f0f0f0" /></svg></Pin>
    <Pin><svg width="23" height="23" viewBox="0 0 23 23" fill="none" stroke="#f0148c"><rect x="1.500" y="1.500" width="20" height="20" rx="6.500" strokeWidth="2.800" /><path d="M7.500 5.500q-1.500 1-1.500 4v4q0 3.500 2.800 3.500 2.700 0 2.700-3V9v5q0 3 2.700 3 2.800 0 2.800-3.500v-4q0-3-1.500-4" strokeWidth="2" /><path d="M0 11.500h4M19 11.500h4" stroke="#211f1e" strokeWidth="1.500" /></svg></Pin>
    <Pin open>
      <svg width="22" height="22" viewBox="0 0 22 22"><path d="M0 0h22v22H0z" fill="#f8f8f8" /><g stroke="#426784" strokeWidth="1.200"><path d="M11 8v6M8 11h6" /><path d="M11 2v4M9 4h4M11 16v4M9 18h4M4 9v4M2 11h4M18 9v4M16 11h4M6 4.500v3M4.500 6h3M16 4.500v3M14.500 6h3M6 14.500v3M4.500 16h3M16 14.500v3M14.500 16h3" strokeWidth="1" /></g></svg>
    </Pin>
    <Pin open><svg width="20" height="21" viewBox="0 0 20 21"><path d="M1 0h16v18H1z" fill="#7db5df" /><path d="M2 1h14v16H2z" fill="#bfe0f6" /><path d="M2 14h14l3 6H4z" fill="#e9edf2" /><text x="3" y="12" fontSize="11" fill="#e87a22" className="font-['Liberation_Serif',serif] font-bold">A</text><path d="M11 5.500h4M11 8.500h4M4 16.500h10" stroke="#3a73aa" /></svg></Pin>
    <div className="ml-px flex h-[40px] w-[45px] flex-col items-center bg-[#4a4a4a]">
      <div className="flex h-[38px] items-center pt-[2px]">
        <svg width="23" height="23" viewBox="0 0 23 23"><path d="M6 0h15l-4 20H2Q0 6 6 0z" fill="#3865b5" /><path d="M6 1Q1 8 3 20H1Q-2 6 6 0z" fill="#b9cce9" /><path d="M8 4l14-1v18L6 19z" fill="#f6f9fe" stroke="#9fb3d5" /><text x="7.500" y="12.500" fontSize="9" fill="#234c99" className="font-bold">W</text><path d="M17 7h4M17 10h4M9 15.500h12M9 18h12" stroke="#3e67ae" strokeWidth="1.200" /></svg>
      </div>
      <div className="h-[2px] w-full bg-[#fbe8a6]" />
    </div>
    <div className="flex h-[40px] w-[3px] flex-col border-l border-[#2a2a2a] bg-[#5a5a5a]"><span className="mt-auto h-[2px] bg-[#b5a779]" /></div>
  </div>
);

const Tray = () => (
  <div className="ml-auto flex h-full w-[360px] items-center text-[#f4f4f4]">
    <svg width="25" height="24" viewBox="0 0 25 24"><circle cx="13" cy="11" r="9.500" fill="#f99b2c" /><path d="M3 9a3 3 0 0 1 0-6 4.500 4.500 0 0 1 8-.5A3.200 3.200 0 0 1 12 9z" fill="#c1dbfa" /><path d="M14 22a3.200 3.200 0 0 1-.5-6.200A4.200 4.200 0 0 1 21.500 15a3.500 3.500 0 0 1 0 7z" fill="#bdd8fa" /></svg>
    <span className="ml-[7px] w-[55px] text-[13.500px] tracking-[-0.2px]">35°C</span>
    <svg width="111" height="16" viewBox="0 0 111 16" fill="none" stroke="#eee" strokeWidth="1.200">
      <path d="M.5 10.500L6 5l5.500 5.500" strokeWidth="1.400" />
      <path d="M26 15C27 8 32 3.500 37 4M28.500 15C29.500 10 33 6.800 37.500 7M31 15C32 12 34.500 10 38 10M34 15q1-2.500 4-2.500" strokeWidth="1" /><path d="M36 15h2" strokeWidth="2" />
      <path d="M51 5.500h9v7H47.500V9M60.500 7.500h1.500v3h-1.500M46.500 1v2.500M50.500 1v2.500" /><path d="M45 3.500h7v1.500q-1 2.500-3.500 2.500T45 5z" fill="#eee" stroke="none" /><path d="M49.500 8.500h3v2.500h-3z" fill="#eee" stroke="none" />
      <path d="M71 6h3l4-3.500v11L74 10h-3zM80 6q1.500 2 0 4M82.500 4q3 4 0 8M85 2q4 6 0 12" />
      <path d="M96 13a3 3 0 0 1 0-6 5 5 0 0 1 9-1 3.500 3.500 0 0 1 1 7z" fill="#8b8b8b" stroke="none" /><path d="M94 2l15 12" stroke="#ddd" />
    </svg>
    <span className="ml-[9px] w-[30px] text-[12px] tracking-[-0.3px]">ENG</span>
    <span className="flex w-[69px] flex-col items-center pb-px text-[11.500px] leading-[18px] tracking-[-0.2px]"><span>03:45 PM</span><span>09-10-2023</span></span>
    <svg className="ml-[12px]" width="25" height="26" viewBox="0 0 25 26"><path d="M1 2h17v14H9l-4 4v-4H1z" fill="#fff" /><path d="M4 6h11M4 9h11M4 12h6" stroke="#222" /><circle cx="16.500" cy="17.500" r="7.500" fill="#333" stroke="#888" /><text x="13.200" y="22" fontSize="12" fill="#fff">2</text></svg>
    <span className="ml-auto h-full w-[5px] border-l border-[#6b6b6b]" />
  </div>
);

const Taskbar = () => (
  <div className="flex h-[40px] shrink-0 items-center bg-[#201f1e]">
    <div className="flex w-[48px] justify-center"><svg width="16" height="16" viewBox="0 0 16 16" fill="#fff"><path d="M0 2.200L6.500 1.300v6.200H0zM7.500 1.100L16 0v7.500H7.500zM0 8.500h6.500v6.200L0 13.800zM7.500 8.500H16V16l-8.500-1.100z" /></svg></div>
    <div className="flex h-[40px] w-[288px] items-center border border-[#5b5b5b] bg-[#323232] pl-[11px] text-[14px] text-[#d6d6d6]">
      <svg width="17" height="17" viewBox="0 0 17 17" fill="none" stroke="#e5e5e5" strokeWidth="1.300"><circle cx="10.500" cy="6" r="5.200" /><path d="M6.800 9.700L.5 16" /></svg>
      <span className="ml-[11px] pt-px tracking-[-0.04px]">Type here to search</span>
    </div>
    <svg className="ml-[16px]" width="17" height="16" viewBox="0 0 17 16" fill="none" stroke="#f1f1f1" strokeWidth="1.200"><path d="M.6 0v2.600h10.800V0M.6 16v-2.600h10.800V16M.6 5.600h10.800v5H.600zM14.500 0v3M14.500 8v8" /><path d="M13 4h3v3h-3z" fill="#fff" stroke="none" /></svg>
    <TaskIcons />
    <Tray />
  </div>
);

export default function App() {
  return (
    <div className="relative flex h-[768px] w-[1366px] flex-col overflow-hidden font-['Open_Sans','Noto_Sans',sans-serif] text-[11px] leading-none">
      <TitleBar />
      <Tabs />
      <Ribbon />
      <Workspace />
      <StatusBar />
      <Taskbar />
      <div className="absolute top-[2px] left-[2px] z-20"><OfficeOrb /></div>
    </div>
  );
}
